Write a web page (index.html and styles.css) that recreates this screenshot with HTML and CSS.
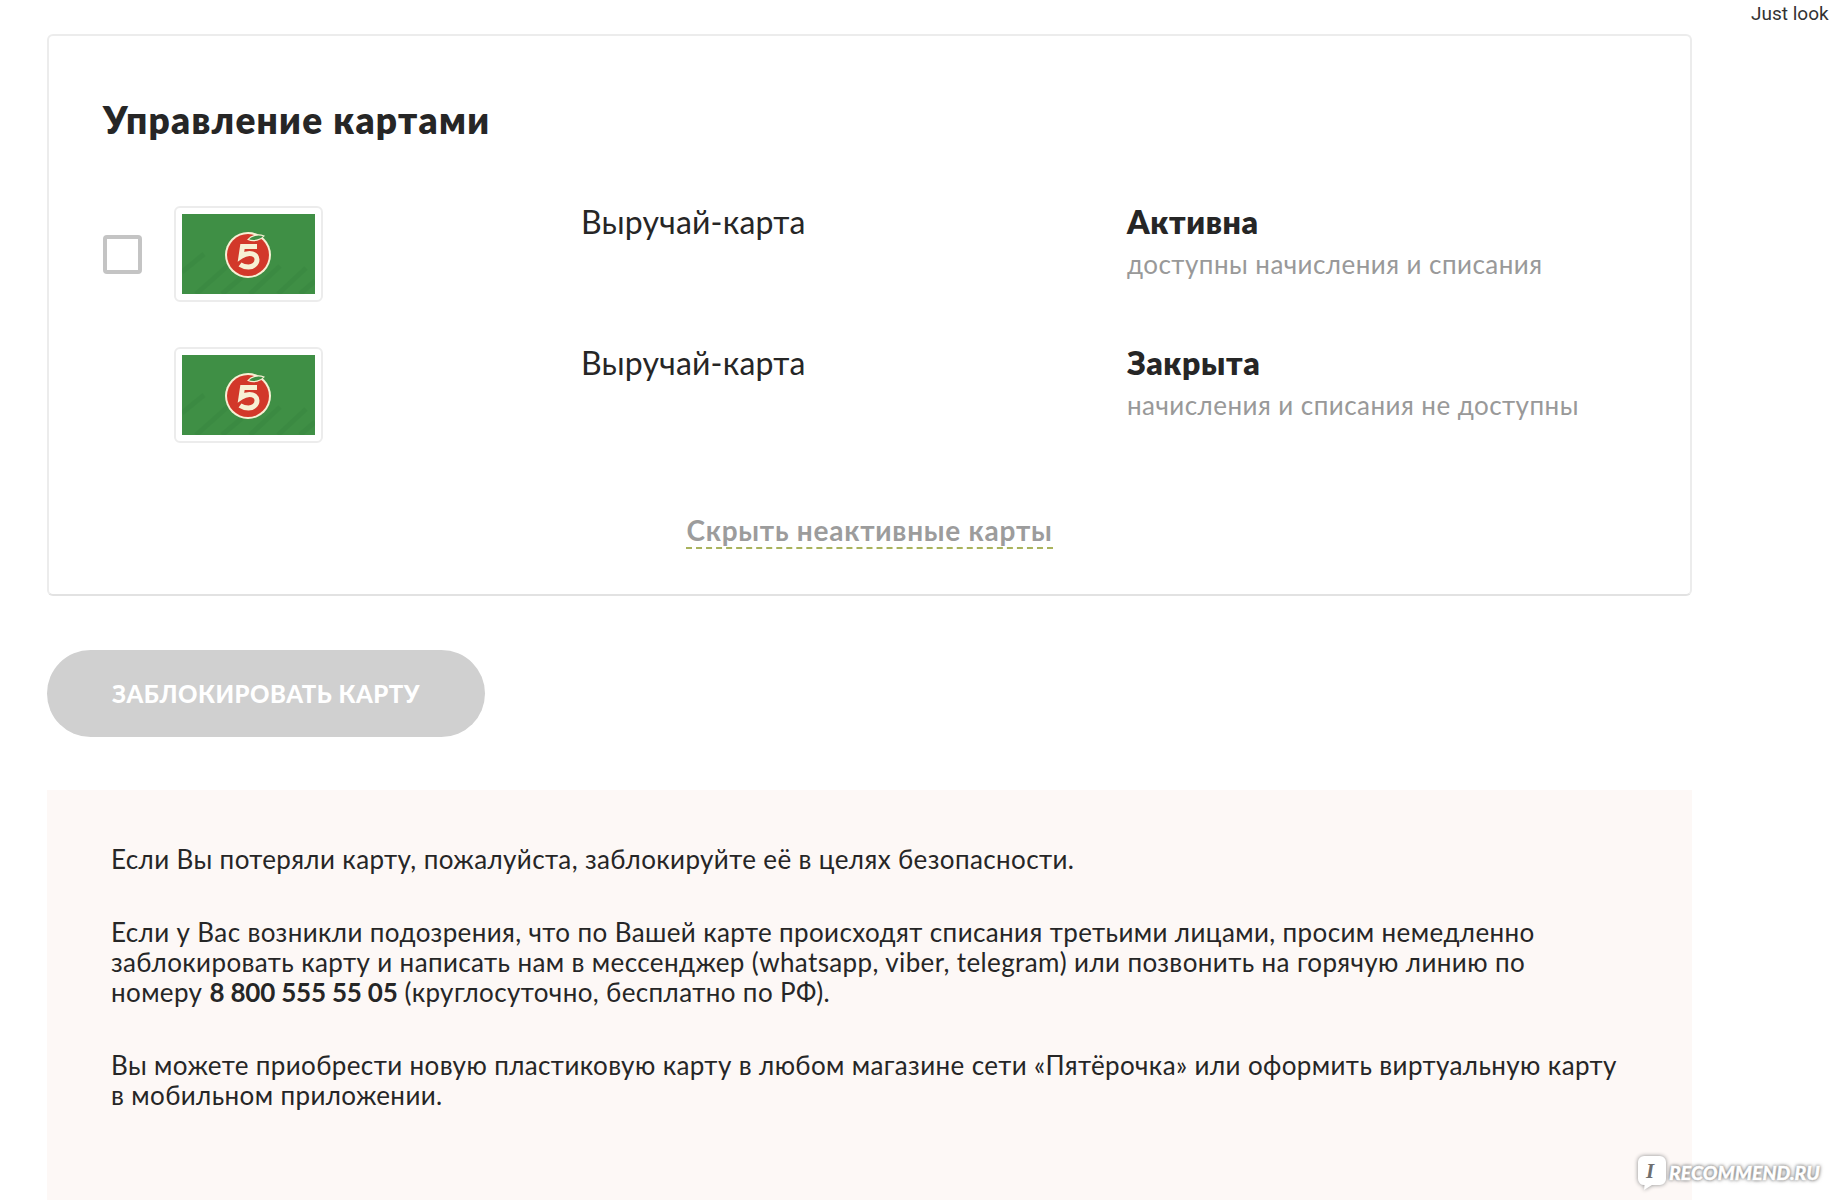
FILE: index.html
```html
<!DOCTYPE html>
<html lang="ru">
<head>
<meta charset="utf-8">
<title>Управление картами</title>
<link rel="stylesheet" href="styles.css">
</head>
<body>
<svg class="defs" width="0" height="0" aria-hidden="true">
  <defs>
    <symbol id="loyalty-card" viewBox="0 0 133 80">
      <rect width="133" height="80" fill="#3f8f45"/>
      <g stroke="#3a8841" stroke-width="5" opacity=".6">
        <path d="M0 58 22 40M14 80 50 48M40 80 66 58M68 80 98 52M96 80 124 54M118 80 133 67"/>
      </g>
      <circle cx="66" cy="41" r="23" fill="#f7f0d4"/>
      <circle cx="66" cy="41" r="21" fill="#d2382a"/>
      <path d="M66 25.500c3-4 10-6 16-3.500-3 4-10 6-16 3.500z" fill="#3f8f45" stroke="#f7f0d4" stroke-width="1.200"/>
      <path d="M75 32.500H60.500l-1.500 10c3-2 6-3 8.500-3 4.500 0 7.500 2.500 7.500 6 0 4.500-4 7.500-8.500 7.500-3 0-6-.8-8.500-2.500" fill="none" stroke="#f7f0d4" stroke-width="5"/>
    </symbol>
  </defs>
</svg>
<div class="page">
  <main class="main">
    <section class="card">
      <h1 class="title">Управление картами</h1>
      <div class="rows">
        <div class="row">
          <div class="check-cell"><span class="checkbox"></span></div>
          <div class="thumb"><svg class="thumb-img"><use href="#loyalty-card"/></svg></div>
          <div class="name">Выручай-карта</div>
          <div class="status">
            <div class="status-title">Активна</div>
            <div class="status-note">доступны начисления и списания</div>
          </div>
        </div>
        <div class="row">
          <div class="check-cell"></div>
          <div class="thumb"><svg class="thumb-img"><use href="#loyalty-card"/></svg></div>
          <div class="name">Выручай-карта</div>
          <div class="status">
            <div class="status-title">Закрыта</div>
            <div class="status-note">начисления и списания не доступны</div>
          </div>
        </div>
      </div>
      <div class="toggle-wrap"><span class="toggle">Скрыть неактивные карты</span></div>
    </section>
    <button class="block-btn" type="button">Заблокировать карту</button>
    <section class="info">
      <p class="info-p">Если Вы потеряли карту, пожалуйста, заблокируйте её в целях безопасности.</p>
      <p class="info-p">Если у Вас возникли подозрения, что по Вашей карте происходят списания третьими лицами, просим немедленно заблокировать карту и написать нам в мессенджер (whatsapp, viber, telegram) или позвонить на горячую линию по<br>номеру <b class="phone">8 800 555 55 05</b> (круглосуточно, бесплатно по РФ).</p>
      <p class="info-p">Вы можете приобрести новую пластиковую карту в любом магазине сети «Пятёрочка» или оформить виртуальную карту<br>в мобильном приложении.</p>
    </section>
  </main>
  <div class="side">Just look</div>
</div>
<div class="watermark">
  <svg class="wm-icon" viewBox="0 0 30 36"><path d="M7 1h16a6 6 0 0 1 6 6v17a6 6 0 0 1-6 6H15l-8 5 .5-5A6 6 0 0 1 1 24V7a6 6 0 0 1 6-6z" fill="#fff"/></svg>
  <span class="wm-i">I</span>
  <span class="wm-text">RECOMMEND.RU</span>
</div>
</body>
</html>
```
FILE: styles.css
```css
* { box-sizing: border-box; }
html, body { margin: 0; height: 1200px; overflow: hidden; background: #fff; }
body { font-family: "Lato", "Noto Sans", sans-serif; color: #262626; position: relative; }
.defs { position: absolute; }
.page { display: flex; padding-top: 34px; padding-left: 47px; }
.main { width: 1645px; flex: none; }
.side { font: 19px/1 "Roboto", sans-serif; color: #333; margin-top: -30px; margin-left: 59px; white-space: nowrap; }
.card { height: 562px; border: 2px solid #ececec; border-bottom-color: #e2e2e2; border-radius: 6px; padding: 64px 54px 0; }
.title { margin: 0 0 66px; font-size: 37px; line-height: 40px; font-weight: 800; color: #262626; letter-spacing: 1.25px; }
.rows { display: flex; flex-direction: column; gap: 45px; }
.row { display: grid; grid-template-columns: 71px 149px 407px 1fr; height: 96px; }
.check-cell { display: flex; align-items: center; }
.checkbox { width: 39px; height: 39px; border: 4px solid #c4c4c4; border-radius: 4px; background: #fff; }
.thumb { width: 149px; height: 96px; padding: 6px; border: 2px solid #ececec; border-radius: 6px; background: #fff; }
.thumb-img { display: block; width: 133px; height: 80px; }
.name { grid-column: 3; margin-left: 258px; width: 400px; font-size: 32px; line-height: 34px; margin-top: -1px; letter-spacing: .2px; white-space: nowrap; }
.status { margin-top: -1px; margin-left: 397px; white-space: nowrap; }
.status-title { font-size: 32px; line-height: 34px; font-weight: 800; letter-spacing: .6px; }
.status-note { margin-top: 9px; font-size: 26px; line-height: 33.500px; color: #999; letter-spacing: .45px; }
.toggle-wrap { display: flex; justify-content: center; margin-top: 70px; }
.toggle { font-size: 28px; line-height: 34px; font-weight: 700; color: #9c9c9c; border-bottom: 2px dashed #a9b35c; letter-spacing: .75px; }
.block-btn { display: block; width: 438px; height: 87px; margin: 54px 0 53px; padding: 0; border: 0; border-radius: 44px; background: #d0d0d0; color: #fff; font: 900 24px "Lato", sans-serif; text-transform: uppercase; letter-spacing: .5px; }
.info { height: 410px; background: #fdf8f6; padding: 54px 40px 0 64px; }
.info-p { margin: 0 0 43px; font-size: 26px; line-height: 30px; color: #262626; letter-spacing: .38px; }
.phone { font-weight: 700; letter-spacing: -.2px; }
.watermark { position: absolute; left: 1637px; top: 1155px; display: flex; align-items: center; height: 36px; color: #fff; }
.wm-icon { width: 30px; height: 36px; filter: drop-shadow(0 0 2px #888); }
.wm-i { position: absolute; left: 9px; top: 4px; font: italic 900 21px "Liberation Serif", serif; color: #6f6f6f; }
.wm-text { margin-left: 2px; margin-top: -2px; font: italic 900 19.500px "Lato", sans-serif; -webkit-text-stroke: .4px #fff; text-shadow: 0 0 3px #777, 0 0 4px #777; }
```
